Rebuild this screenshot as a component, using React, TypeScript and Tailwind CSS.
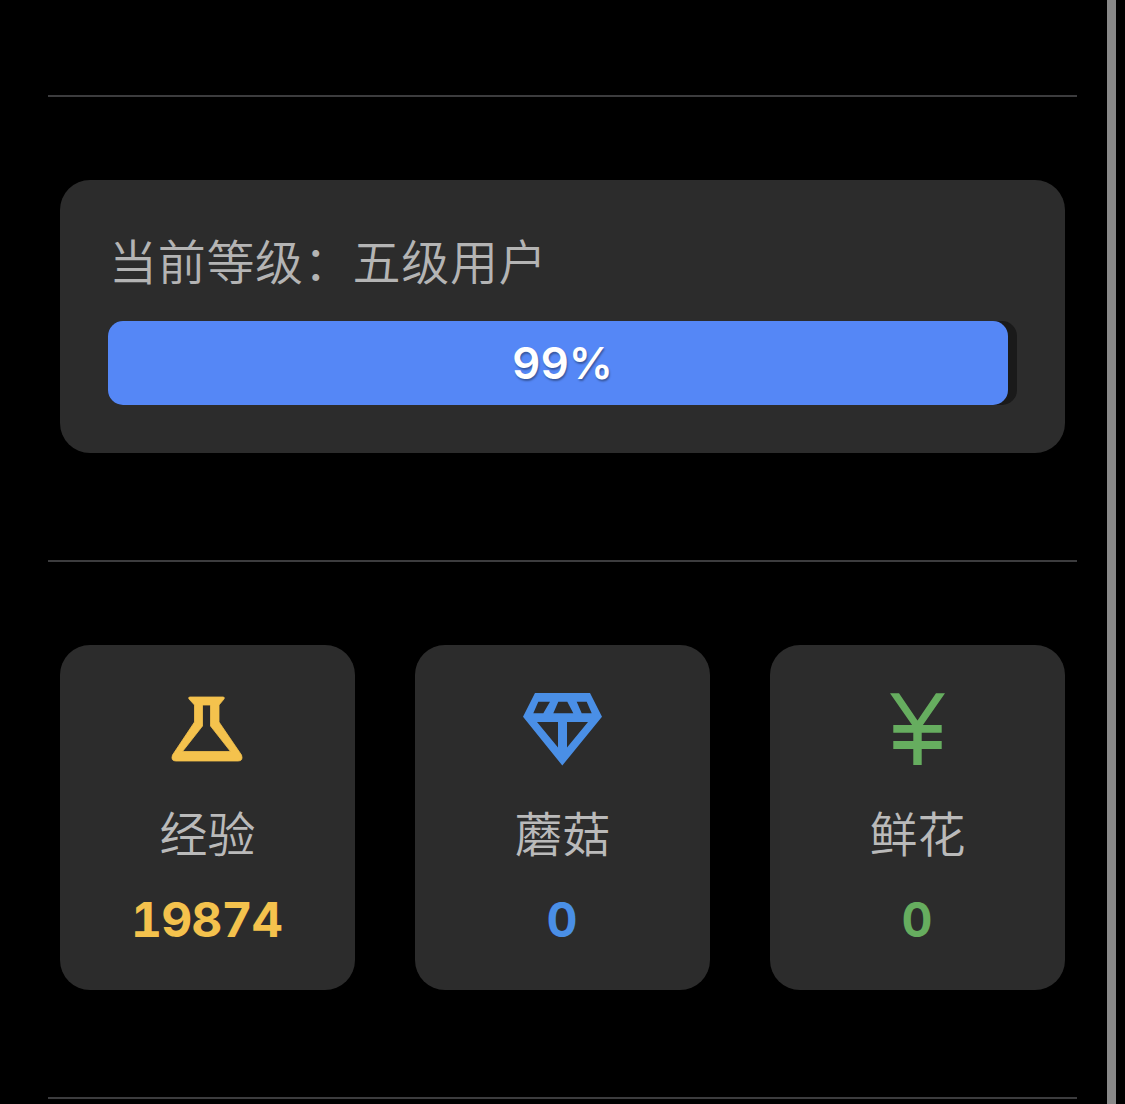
const cjk = 'font-["Noto_Sans_CJK_SC","Noto_Sans",sans-serif] font-[350]'
const latin = 'font-["Inter","Noto_Sans_CJK_SC",sans-serif] tabular-nums'

function Divider() {
  return <div className="h-[2px] w-full bg-[#3c3c3e]" />
}

function Flask() {
  return (
    <svg width="72" height="66" viewBox="0 0 72 66" className="mt-[6px] -ml-[1px]">
      <path
        fillRule="evenodd"
        fill="#f4c24d"
        stroke="#f4c24d"
        strokeWidth="0.8"
        strokeLinejoin="round"
        d="M19 1H52Q54 1 53 3L48 9V26L70.5 59Q72.5 65 67 65H5Q-0.5 65 1.5 59L23.5 26V9L18 3Q17 1 19 1ZM31.5 9V30L11.5 55.5H59.5L39.5 30V9Z"
      />
    </svg>
  )
}

function Diamond() {
  return (
    <svg width="81" height="74" viewBox="0 0 81 74" className="mt-[2px]">
      <path
        fillRule="evenodd"
        fill="#4a8fe6"
        d="M13 1H68L80 24.7L40.3 73.5L1 24.7ZM16.3 9.7H28L21.3 21.3H11.3ZM36.3 9.7H45.3L51.3 21.3H31.3ZM54.7 9.7H64.7L69.7 21.3H59.7ZM15 30H36V55.5ZM45 30H66L45 55.5Z"
      />
    </svg>
  )
}

function Yen() {
  return (
    <svg width="60" height="76" viewBox="0 0 60 76">
      <path
        fill="#66ad5f"
        d="M2 3.3H11L29.5 30.5L48 3.3H57L33.7 36.7V35H53.7V42.7H33.7V51H53.7V59H33.7V75H25.3V59H5.3V51H25.3V42.7H5.3V35H25.3V36.7Z"
      />
    </svg>
  )
}

const stats = [
  { label: '经验', value: '19874', icon: <Flask />, color: 'text-[#f4c24d]' },
  { label: '蘑菇', value: '0', icon: <Diamond />, color: 'text-[#4a8fe6]' },
  { label: '鲜花', value: '0', icon: <Yen />, color: 'text-[#66ad5f]' },
]

export default function App() {
  return (
    <div className="flex h-[1104px] w-[1125px] overflow-hidden bg-black">
      <main className="ml-[48px] w-[1029px] pt-[95px]">
        <Divider />

        <section className="mx-[12px] mt-[83px] mb-[107px] h-[273px] rounded-[30px] bg-[#2c2c2c] px-[48px] pt-[53px]">
          <p className={`-mt-[4px] h-[60px] pl-[1px] text-[48px] leading-[60px] tracking-[0.7px] text-[#b4b4b4] ${cjk}`}>当前等级：五级用户</p>
          <div className="relative mt-[32px] h-[84px] w-full rounded-[15px] bg-[#1a1a1a]">
            <div className="h-full w-[99%] rounded-[15px] bg-[#5587f6]" />
            <span className={`absolute inset-0 flex items-center justify-center text-[44px] font-semibold text-white [text-shadow:1px_2px_2px_rgba(0,0,0,0.35)] ${latin}`}>99%</span>
          </div>
        </section>

        <Divider />

        <section className="mx-[12px] mt-[83px] mb-[107px] grid h-[345px] grid-cols-3 gap-[60px]">
          {stats.map((stat) => (
            <div key={stat.label} className="flex flex-col items-center rounded-[30px] bg-[#2c2c2c] pt-[45px]">
              <div className="flex h-[80px] items-start">{stat.icon}</div>
              <p className={`mt-[31px] h-[60px] text-[48px] leading-[60px] text-[#bababa] ${cjk}`}>{stat.label}</p>
              <p className={`mt-[29px] h-[60px] pr-[2px] text-[48px] leading-[60px] font-bold tracking-[-0.8px] ${stat.color} ${latin}`}>{stat.value}</p>
            </div>
          ))}
        </section>

        <Divider />
      </main>

      <div className="ml-[30px] h-full w-[9px] bg-[#888888]" />
    </div>
  )
}
